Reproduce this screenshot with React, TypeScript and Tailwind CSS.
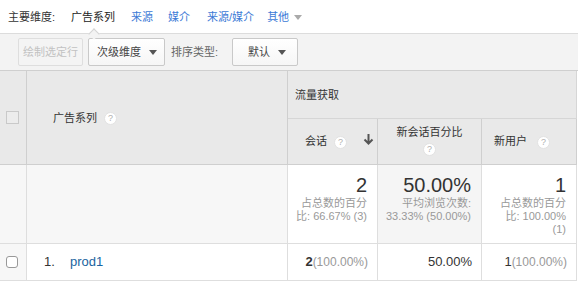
import React from 'react'

const font = { fontFamily: '"Liberation Sans", "Noto Sans CJK SC", sans-serif' }

function Help() {
  return (
    <span className="inline-flex h-[13px] w-[13px] shrink-0 items-center justify-center rounded-full border border-[#e2e2e2] bg-white text-[9px] leading-none text-[#b0b0b0]">
      ?
    </span>
  )
}

function Caret({ color = '#555' }: { color?: string }) {
  return (
    <svg width="8" height="5" viewBox="0 0 8 5" className="shrink-0">
      <path d="M0 0 L8 0 L4 5 Z" fill={color} />
    </svg>
  )
}

export default function App() {
  return (
    <div className="h-[282px] w-[578px] overflow-hidden bg-white text-[#333]" style={font}>
      {/* dimension tabs */}
      <div className="relative flex h-[34px] items-center border-b border-[#dcdcdc] pl-[8px] pt-[2px] text-[11px]">
        <span className="text-[#333]">主要维度:</span>
        <span className="ml-[16px] text-[#222]">广告系列</span>
        <a className="ml-[16px] text-[#3c7ad6]">来源</a>
        <a className="ml-[15px] text-[#3c7ad6]">媒介</a>
        <a className="ml-[17px] text-[#3c7ad6]">来源/媒介</a>
        <a className="ml-[13px] flex items-center gap-[5px] text-[#3c7ad6]">
          其他
          <Caret color="#aaa" />
        </a>
        <div className="absolute bottom-[-5px] left-[90px] h-[8px] w-[8px] rotate-45 border-l border-t border-[#d4d4d4] bg-[#f3f3f3]" />
      </div>

      {/* toolbar */}
      <div className="flex h-[36px] items-center bg-[#f3f3f3] pl-[18px] text-[11px]">
        <button className="flex h-[28px] w-[65px] items-center justify-center rounded-[2px] border border-[#dedede] bg-[#f4f4f4] text-[#c2c2c2]">
          绘制选定行
        </button>
        <button className="ml-[5px] flex h-[28px] w-[77px] items-center justify-between rounded-[2px] border border-[#c9c9c9] bg-gradient-to-b from-white to-[#f6f6f6] pl-[8px] pr-[7px] text-[#444]">
          次级维度
          <Caret />
        </button>
        <span className="ml-[6px] text-[#666]">排序类型:</span>
        <button className="ml-[14px] flex h-[28px] w-[66px] items-center justify-between rounded-[2px] border border-[#c9c9c9] bg-gradient-to-b from-white to-[#f6f6f6] pl-[15px] pr-[11px] text-[#444]">
          默认
          <Caret />
        </button>
      </div>

      {/* table */}
      <div className="grid grid-cols-[27px_261px_90px_104px_95px] grid-rows-[48px_46px_79px_37px] border-t border-[#cfcfcf] text-[11px]">
        {/* header */}
        <div className="row-span-2 flex items-center border-b border-r border-[#cfcfcf] bg-[#e9e9e9] pl-[6px]">
          <span className="h-[13px] w-[13px] border border-[#c9c9c9] bg-[#ececec]" />
        </div>
        <div className="row-span-2 flex items-center gap-[7px] border-b border-r border-[#cfcfcf] bg-[#e9e9e9] pl-[26px] pt-[2px] text-[#333]">
          广告系列
          <Help />
        </div>
        <div className="col-span-3 flex items-center border-b border-r border-[#d6d6d6] bg-[#e9e9e9] pl-[7px] pt-[2px]">
          流量获取
        </div>
        <div className="flex items-center border-b border-r border-[#cfcfcf] bg-[#e9e9e9] pl-[17px] pr-[3px]">
          <span>会话</span>
          <span className="ml-[7px]">
            <Help />
          </span>
          <svg width="11" height="12" viewBox="0 0 11 12" className="ml-auto mb-[6px]">
            <path d="M5.5 1 V10 M1.5 6.5 L5.5 10.5 L9.5 6.5" stroke="#555" strokeWidth="2" fill="none" />
          </svg>
        </div>
        <div className="flex flex-col items-center justify-center gap-[5px] border-b border-r border-[#cfcfcf] bg-[#e9e9e9]">
          <span className="leading-none">新会话百分比</span>
          <Help />
        </div>
        <div className="flex items-center border-b border-r border-[#cfcfcf] bg-[#e9e9e9] pl-[12px]">
          <span>新用户</span>
          <span className="ml-[10px]">
            <Help />
          </span>
        </div>

        {/* totals */}
        <div className="border-b border-r border-[#dedede] bg-[#f7f7f7]" />
        <div className="border-b border-r border-[#dedede] bg-[#f7f7f7]" />
        <div className="flex flex-col items-end border-b border-r border-[#dedede] bg-white pr-[10px] pt-[9px] text-right">
          <span className="text-[20px] leading-[22px] text-[#333]">2</span>
          <span className="mt-[1px] whitespace-nowrap leading-[13px] text-[#999]">
            占总数的百分
            <br />
            比: 66.67% (3)
          </span>
        </div>
        <div className="flex flex-col items-end border-b border-r border-[#dedede] bg-[#f5f5f5] pr-[10px] pt-[9px] text-right">
          <span className="text-[20px] leading-[22px] text-[#333]">50.00%</span>
          <span className="mt-[1px] whitespace-nowrap leading-[13px] text-[#999]">
            平均浏览次数:
            <br />
            33.33% (50.00%)
          </span>
        </div>
        <div className="flex flex-col items-end border-b border-r border-[#dedede] bg-white pr-[10px] pt-[9px] text-right">
          <span className="text-[20px] leading-[22px] text-[#333]">1</span>
          <span className="mt-[1px] whitespace-nowrap leading-[13px] text-[#999]">
            占总数的百分
            <br />
            比: 100.00%
            <br />
            (1)
          </span>
        </div>

        {/* data row */}
        <div className="flex items-center border-b border-r border-[#dedede] bg-[#f7f7f7] pl-[6px]">
          <span className="h-[12px] w-[12px] rounded-[3px] border border-[#999] bg-white" />
        </div>
        <div className="flex items-center border-b border-r border-[#dedede] pl-[17px] text-[13px]">
          <span className="w-[26px] text-[#333]">1.</span>
          <a className="text-[#1a64a0]">prod1</a>
        </div>
        <div className="flex items-center justify-end border-b border-r border-[#dedede] pr-[9px]">
          <span className="text-[13px] font-bold text-[#333]">2</span>
          <span className="text-[12px] text-[#999]">(100.00%)</span>
        </div>
        <div className="flex items-center justify-end border-b border-r border-[#dedede] pr-[9px] text-[13px] text-[#333]">
          50.00%
        </div>
        <div className="flex items-center justify-end border-b border-r border-[#dedede] pr-[9px]">
          <span className="text-[13px] text-[#333]">1</span>
          <span className="text-[12px] text-[#999]">(100.00%)</span>
        </div>
      </div>
    </div>
  )
}
